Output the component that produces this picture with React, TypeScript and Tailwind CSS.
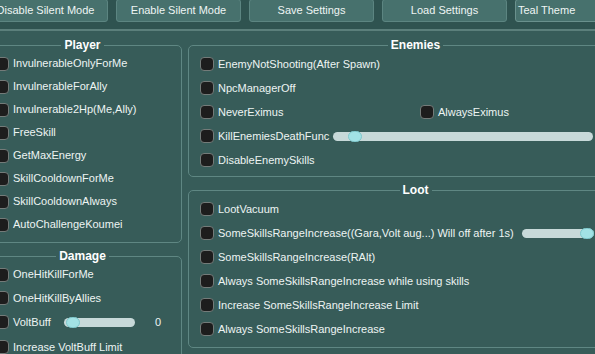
import React from "react";

const font = { fontFamily: '"Liberation Sans", Arial, sans-serif' };

function Check() {
  return (
    <span className="w-[14px] h-[14px] shrink-0 rounded-[4px] bg-[#1d1d1d] border border-[#737b79] inline-block" />
  );
}

function Slider({ width, knobLeft }: { width: number; knobLeft: number }) {
  return (
    <span className="relative inline-block h-[9px] rounded-full bg-[#c7d9d9] shrink-0" style={{ width }}>
      <span
        className="absolute top-[-1px] w-[14px] h-[11px] rounded-full bg-[#a2e2e5] border border-[#7fc8cc]"
        style={{ left: knobLeft }}
      />
    </span>
  );
}

function Row({
  label,
  h,
  labelClass,
  children,
}: {
  label?: string;
  h: string;
  labelClass?: string;
  children?: React.ReactNode;
}) {
  return (
    <div className={`flex items-center ${h} pl-[11px]`}>
      <Check />
      <span className={`ml-[4px] text-[11px] text-[#edf4f3] whitespace-nowrap shrink-0 ${labelClass ?? ""}`}>{label}</span>
      {children}
    </div>
  );
}

function Panel({ title, className, children }: { title: string; className?: string; children: React.ReactNode }) {
  return (
    <fieldset className={`border border-[#5f8783] rounded-[5px] m-0 p-0 min-w-0 ${className ?? ""}`}>
      <legend className="mx-auto px-[3px] text-[12px] font-bold text-white leading-[14px]">{title}</legend>
      {children}
    </fieldset>
  );
}

function Btn({ label }: { label: string }) {
  return (
    <div className="w-[125px] h-[23px] shrink-0 rounded-[3px] bg-[#47716d] border border-[#5c8581] flex items-center justify-center text-[11px] text-[#eef5f4]">
      {label}
    </div>
  );
}

export default function App() {
  return (
    <div className="w-[595px] h-[354px] overflow-hidden bg-[#375c59]" style={font}>
      <div className="ml-[-17px] w-[665px]">
        <div className="h-[30px] bg-[#2f5350] flex gap-[8px] pt-0 mt-[-1px]">
          <Btn label="Disable Silent Mode" />
          <Btn label="Enable Silent Mode" />
          <Btn label="Save Settings" />
          <Btn label="Load Settings" />
          <div className="w-[130px] h-[23px] shrink-0 rounded-[3px] bg-[#47716d] border border-[#6a918d] flex items-center pl-[2px] text-[11px] text-[#eef5f4]">
            Teal Theme
          </div>
        </div>
        <div className="h-[2px] bg-[#5b7f7b]" />
        <div className="flex gap-[6px] pt-[7px]">
          <div className="w-[199px] flex flex-col gap-[6px]">
            <Panel title="Player" className="pb-[6px]">
              <Row h="h-[23px]" label="InvulnerableOnlyForMe" />
              <Row h="h-[23px]" label="InvulnerableForAlly" />
              <Row h="h-[23px]" label="Invulnerable2Hp(Me,Ally)" />
              <Row h="h-[23px]" label="FreeSkill" />
              <Row h="h-[23px]" label="GetMaxEnergy" />
              <Row h="h-[23px]" label="SkillCooldownForMe" />
              <Row h="h-[23px]" label="SkillCooldownAlways" />
              <Row h="h-[23px]" label="AutoChallengeKoumei" />
            </Panel>
            <Panel title="Damage" className="pb-[6px]">
              <Row h="h-[23px]" label="OneHitKillForMe" />
              <Row h="h-[24px]" label="OneHitKillByAllies" />
              <Row h="h-[24px]" label="VoltBuff" labelClass="w-[51px]">
                <Slider width={71} knobLeft={2} />
                <span className="ml-[20px] text-[11px] text-[#edf4f3]">0</span>
              </Row>
              <Row h="h-[26px]" label="Increase VoltBuff Limit" />
            </Panel>
          </div>
          <div className="w-[455px] flex flex-col gap-[6px]">
            <Panel title="Enemies" className="pb-[4px]">
              <Row h="h-[24px]" label="EnemyNotShooting(After Spawn)" />
              <Row h="h-[24px]" label="NpcManagerOff" />
              <div className="flex items-center h-[24px]">
                <div className="w-[231px]">
                  <Row h="h-[24px]" label="NeverEximus" />
                </div>
                <Check />
                <span className="ml-[4px] text-[11px] text-[#edf4f3]">AlwaysEximus</span>
              </div>
              <Row h="h-[24px]" label="KillEnemiesDeathFunc" labelClass="w-[115px]">
                <Slider width={260} knobLeft={15} />
              </Row>
              <Row h="h-[24px]" label="DisableEnemySkills" />
            </Panel>
            <Panel title="Loot" className="pb-[6px]">
              <Row h="h-[24px]" label="LootVacuum" />
              <Row
                h="h-[24px]"
                label="SomeSkillsRangeIncrease((Gara,Volt aug...) Will off after 1s)"
                labelClass="w-[304px]"
              >
                <Slider width={72} knobLeft={58} />
              </Row>
              <Row h="h-[24px]" label="SomeSkillsRangeIncrease(RAlt)" />
              <Row h="h-[24px]" label="Always SomeSkillsRangeIncrease while using skills" />
              <Row h="h-[24px]" label="Increase SomeSkillsRangeIncrease Limit" />
              <Row h="h-[24px]" label="Always SomeSkillsRangeIncrease" />
            </Panel>
          </div>
        </div>
      </div>
    </div>
  );
}
